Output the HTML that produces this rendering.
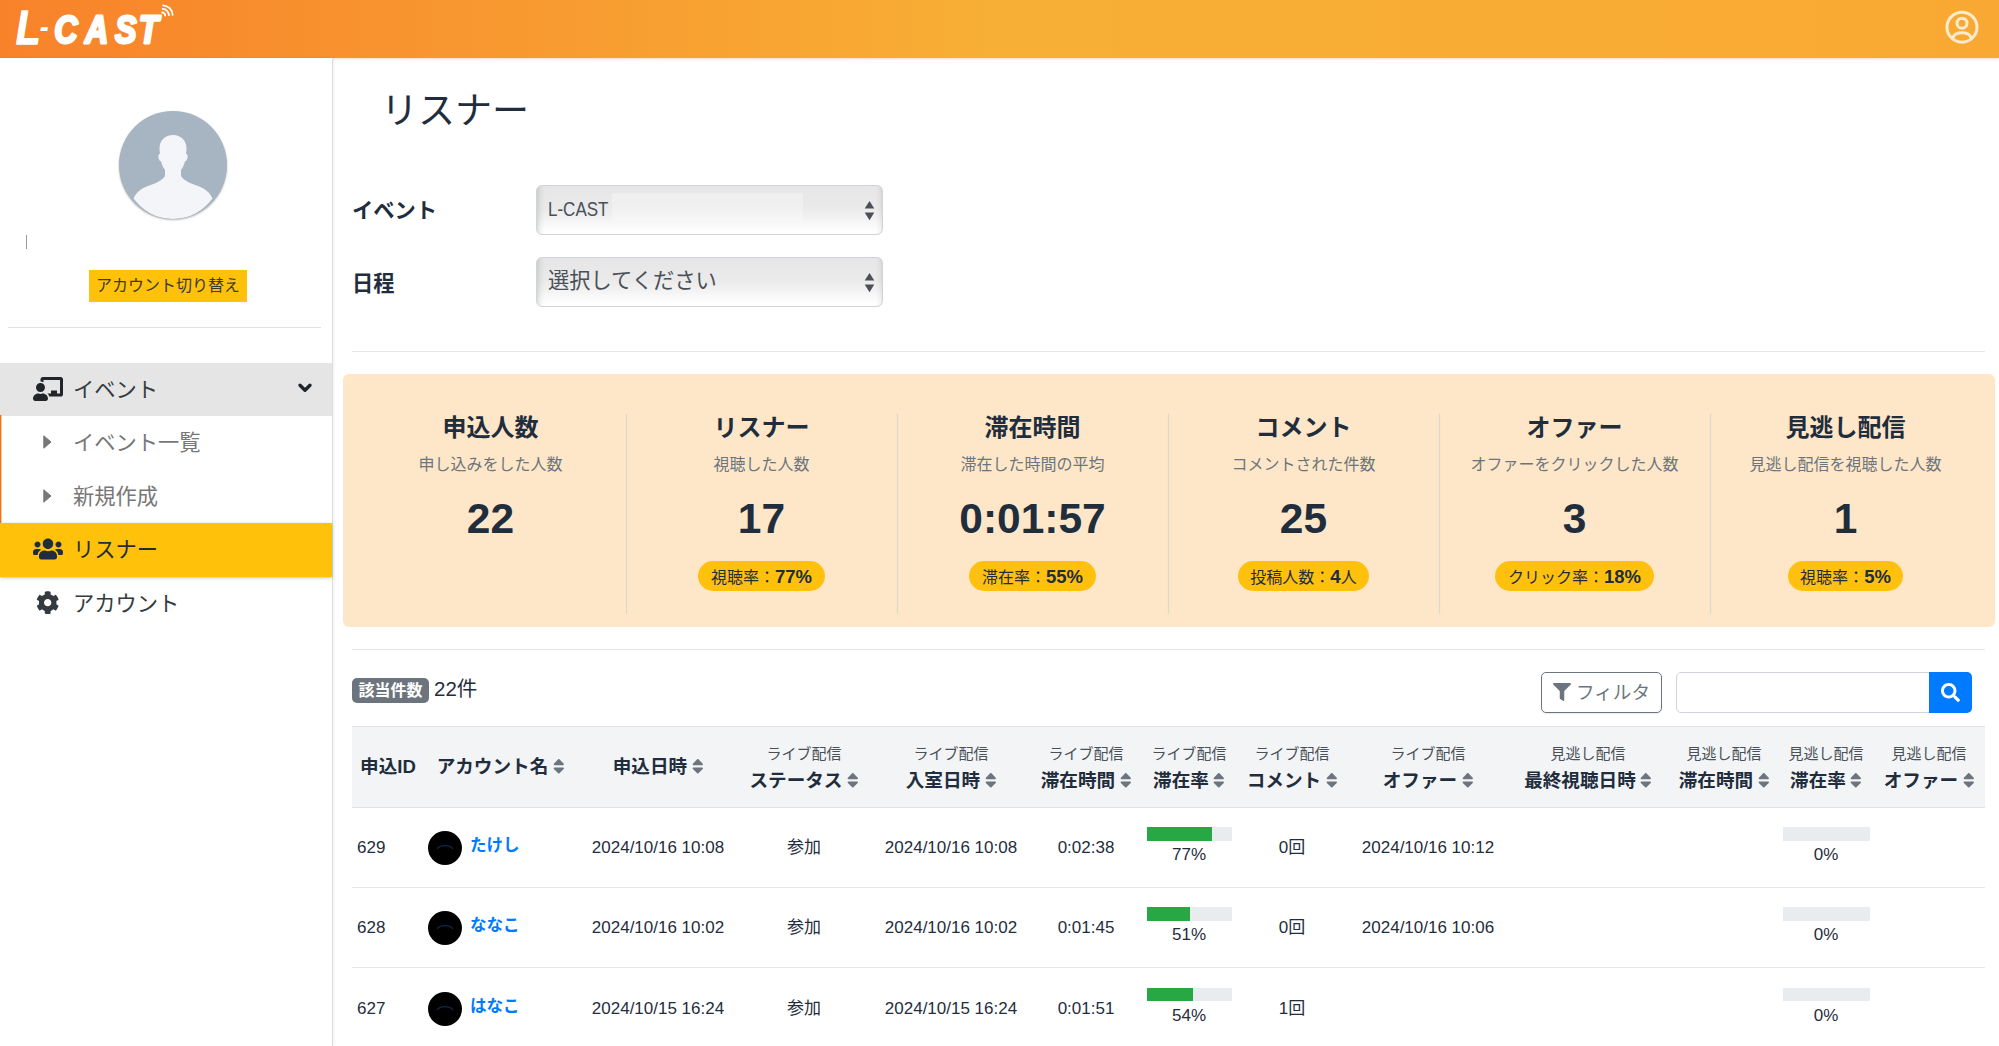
<!DOCTYPE html>
<html lang="ja">
<head>
<meta charset="utf-8">
<title>リスナー | L-CAST</title>
<style>
*{box-sizing:border-box;margin:0;padding:0}
html,body{width:1999px;height:1046px;overflow:hidden;background:#fff}
body{font-family:"Liberation Sans","Noto Sans CJK JP",sans-serif;color:#1f2d3d;position:relative;font-size:17px;line-height:1.5}
.abs{position:absolute}
svg{display:block}
/* header */
#hdr{left:0;top:0;width:1999px;height:58px;background:linear-gradient(90deg,#f8822a 0%,#f8af35 50%,#f9a933 100%);box-shadow:0 1px 2px rgba(248,150,50,.35)}
/* sidebar */
#side{left:0;top:58px;width:333px;height:988px;background:#fff;border-right:1px solid #dcdcdc;box-shadow:1px 0 3px rgba(0,0,0,.06)}
#avatar{left:119px;top:111px;width:108px;height:108px;border-radius:50%;background:#a7b5c2;overflow:hidden;box-shadow:0 1px 2px rgba(0,0,0,.3)}
#cursor{left:26px;top:235px;width:1px;height:14px;background:#9a9a9a}
#switch{left:89px;top:270px;width:158px;height:32px;background:#ffc10a;color:#3a3a32;font-size:16px;line-height:32px;text-align:center;white-space:nowrap}
#shr{left:8px;top:327px;width:313px;height:1px;background:#dee2e6}
.nav{left:0;width:332px;height:53px;font-size:21.25px;line-height:53px;color:#343a40;white-space:nowrap}
.nav .ic{position:absolute;top:0;left:0}
.nav .tx{position:absolute;left:73px;top:1px}
.sub{color:#777}
/* main */
#title{left:381px;top:83px;font-size:37px;line-height:58px;color:#1f2d3d;white-space:nowrap}
.lbl{left:352px;font-size:21.25px;font-weight:bold;line-height:32px;white-space:nowrap;color:#1f2d3d}
.sel{left:536px;width:347px;height:50px;border:1px solid #ced4da;border-radius:6px;background:linear-gradient(90deg,rgba(60,70,80,.16) 0,rgba(60,70,80,.05) 4px,rgba(0,0,0,0) 8px,rgba(0,0,0,0) 339px,rgba(60,70,80,.05) 343px,rgba(60,70,80,.16) 347px),linear-gradient(180deg,#e6e6e6 0%,#eaeaea 45%,#f1f1f1 65%,#fbfbfb 85%,#ffffff 100%);color:#495057;white-space:nowrap;overflow:hidden}
.sel .t{position:absolute;left:11px;top:0;line-height:48px}
.sel svg{position:absolute;left:327px;top:14px}
.hr{height:1px;background:#e3e6ea}
/* stats */
#stats{left:343px;top:374px;width:1652px;height:253px;background:#fee7c8;border-radius:6px}
.st{position:absolute;top:0;width:271px;height:253px;text-align:center;white-space:nowrap;color:#1f2d3d}
.st .h{position:absolute;left:0;width:100%;top:36px;font-size:24px;font-weight:bold;line-height:36px}
.st .s{position:absolute;left:0;width:100%;top:78.500px;font-size:16px;line-height:24px;color:#6c757d}
.st .n{position:absolute;left:0;width:100%;top:113px;font-size:42.5px;font-weight:bold;line-height:64px}
.st .b{position:absolute;left:0;width:100%;top:187px;height:30px;line-height:30px}
.st .b span.p{display:inline-block;height:30px;padding:1px 12.500px 0;border-radius:15px;background:#ffc10e;font-size:16px;line-height:29px;color:#1f2d3d;vertical-align:top}
.st .b b{font-size:18.5px}
.dv{position:absolute;top:40px;width:1px;height:200px;background:#ddd9d1;box-shadow:0 0 1px rgba(200,200,200,.6)}
/* table */
#cnt{left:352px;top:678px;height:25px;padding:0 6.500px;background:#6c757d;color:#fff;font-weight:bold;font-size:16px;line-height:25px;border-radius:5px;white-space:nowrap}
#cntn{left:434px;top:672px;font-size:20.500px;line-height:34px;color:#1f2d3d;white-space:nowrap}
#fbtn{left:1541px;top:672px;width:121px;height:41px;border:1px solid #6c757d;border-radius:5px;color:#6c757d;font-size:18.6px;line-height:39px;white-space:nowrap;box-shadow:0 1px 1px rgba(0,0,0,.08)}
#sinp{left:1676px;top:672px;width:254px;height:41px;border:1px solid #ced4da;border-radius:5px 0 0 5px;background:#fff}
#sbtn{left:1929px;top:672px;width:43px;height:41px;background:#007bff;border-radius:0 5px 5px 0}
#thead{left:352px;top:726px;width:1633px;height:82px;background:#f3f4f6;border-top:1px solid #dee2e6;border-bottom:1px solid #dee2e6}
.th{position:absolute;text-align:center;white-space:nowrap;color:#1f2d3d}
.th .a{display:block;font-size:15px;line-height:24px;color:#495057;font-weight:normal}
.th .m{display:block;font-size:18.6px;line-height:30px;font-weight:bold}
.th svg{display:inline-block;vertical-align:-3px;margin-left:4.500px}
.row{left:352px;width:1633px;height:80px;border-bottom:1px solid #e3e6ea;font-size:17px;color:#1f2d3d}
.td{position:absolute;top:0;height:80px;line-height:80px;text-align:center;white-space:nowrap}
.av{position:absolute;left:76px;top:23px;width:34px;height:34px;border-radius:50%;background:#000;overflow:hidden}
.nm{position:absolute;left:118px;top:0;line-height:75px;font-weight:bold;color:#007bff;font-size:16.5px}
.pb{position:absolute;top:19px;height:13.5px;background:#e9ecef}
.pb i{display:block;height:100%;background:#28a745}
.pc{position:absolute;top:33px;line-height:28px;text-align:center;font-size:17px}
</style>
</head>
<body>
<div id="hdr" class="abs">
  <svg id="logo" class="abs" style="left:0;top:0" width="200" height="58" viewBox="0 0 200 58"><g transform="scale(0.84 1)"><text x="19 47.32 64.6 101.19 136.9 165.18" y="44 37.2 43.3 43 43.3 43" font-family="'Liberation Sans',sans-serif" font-weight="bold" font-style="italic" font-size="38.4" fill="#fff" stroke="#fff" stroke-width="2.8" stroke-linejoin="round"><tspan font-size="47.5" stroke-width="1.4">L</tspan><tspan font-size="32" stroke-width="0.1">-</tspan>CAST</text></g></svg>
  <svg class="abs" style="left:160px;top:4px" width="14" height="15" viewBox="0 0 14 15" fill="none" stroke="#fff" stroke-width="1.8" stroke-linecap="round">
    <path d="M2.2 8.500a3 3 0 0 1 3 3"/><path d="M2.6 4.900a6.400 6.400 0 0 1 6.300 6.300"/><path d="M3 1.300a10 10 0 0 1 9.600 9.600"/>
  </svg>
  <svg class="abs" style="left:1945px;top:10px" width="34" height="34" viewBox="0 0 34 34" fill="none" stroke="#fdebd0" stroke-width="3">
    <circle cx="17" cy="17.200" r="15"/>
    <circle cx="17" cy="13.200" r="5"/>
    <path d="M8 27.500c1.400-4.200 5-4.800 9-4.800s7.600.6 9 4.800" stroke-linecap="round"/>
  </svg>
</div>

<div id="side" class="abs"></div>
<div id="avatar" class="abs">
  <svg width="108" height="108" viewBox="0 0 108 108"><path fill="#f3f5f8" d="M54 24c-8 0-13.500 5.500-13.500 13.500 0 2 .2 3.800.5 5.300-1.300.3-1.900 1.600-1.600 3.400.4 2.300 1.300 4 2.700 4.300.8 3.600 2.200 6.300 3.900 8.300v6.200c-3 4.800-9.500 7.500-17 10-6.500 2.200-11.500 6-14.500 12.500 9 12 22.500 20.500 39.500 20.500s30.500-8.500 39.500-20.500c-3-6.500-8-10.300-14.500-12.500-7.500-2.500-14-5.200-17-10v-6.200c1.700-2 3.100-4.700 3.900-8.300 1.400-.3 2.300-2 2.700-4.300.3-1.800-.3-3.100-1.600-3.400.3-1.500.5-3.300.5-5.300C67.500 29.500 62 24 54 24z"/></svg>
</div>
<div id="cursor" class="abs"></div>
<div id="switch" class="abs">アカウント切り替え</div>
<div id="shr" class="abs"></div>

<div class="abs nav" style="top:363px;background:#e5e5e5">
  <svg class="ic" style="left:33px;top:14px" width="30" height="24" viewBox="0 0 640 512"><path fill="#212529" d="M208 352c-2.390 0-4.780.350-7.060 1.090C187.980 357.300 174.350 360 160 360c-14.350 0-27.980-2.700-40.950-6.910-2.280-.740-4.660-1.090-7.050-1.090C49.940 352-.330 402.480 0 464.620.140 490.880 21.730 512 48 512h224c26.270 0 47.860-21.120 48-47.380.330-62.140-49.940-112.620-112-112.620zm-48-32c53.020 0 96-42.980 96-96s-42.980-96-96-96-96 42.980-96 96 42.980 96 96 96zM592 0H208c-26.470 0-48 22.250-48 49.590V96c23.420 0 45.100 6.780 64 17.800V64h352v288h-64v-64H384v64h-76.240c19.100 16.690 33.120 38.730 39.690 64H592c26.470 0 48-22.250 48-49.590V49.590C640 22.250 618.470 0 592 0z"/></svg>
  <span class="tx">イベント</span>
  <svg class="ic" style="left:297px;top:19px" width="16" height="12" viewBox="0 0 16 12" fill="none" stroke="#212529" stroke-width="3.400" stroke-linecap="round" stroke-linejoin="round"><path d="M3 3.300L8 8.300 13 3.300"/></svg>
</div>
<div class="abs" style="left:0;top:415px;width:2px;height:108px;background:linear-gradient(90deg,#f8700c 0,#f8700c 50%,rgba(248,112,12,.35) 50%)"></div>
<div class="abs nav sub" style="top:415px;height:54px;line-height:54px">
  <svg class="ic" style="left:43px;top:20px" width="9" height="14" viewBox="0 0 9 14"><path fill="#777" d="M.8 0.800L8 7 .8 13.200z" stroke="#777" stroke-width="1" stroke-linejoin="round"/></svg>
  <span class="tx">イベント一覧</span>
</div>
<div class="abs nav sub" style="top:469px;height:54px;line-height:54px">
  <svg class="ic" style="left:43px;top:20px" width="9" height="14" viewBox="0 0 9 14"><path fill="#777" d="M.8 0.800L8 7 .8 13.200z" stroke="#777" stroke-width="1" stroke-linejoin="round"/></svg>
  <span class="tx">新規作成</span>
</div>
<div class="abs nav" style="top:523px;height:54px;line-height:53px;background:#ffc10a;color:#1f2d3d;box-shadow:0 1px 3px rgba(0,0,0,.25)">
  <svg class="ic" style="left:33px;top:14px" width="30" height="24" viewBox="0 0 640 512"><path fill="#1f2d3d" d="M96 224c35.300 0 64-28.700 64-64s-28.700-64-64-64-64 28.700-64 64 28.700 64 64 64zm448 0c35.300 0 64-28.700 64-64s-28.700-64-64-64-64 28.700-64 64 28.700 64 64 64zm32 32h-64c-17.600 0-33.500 7.100-45.100 18.600 40.300 22.100 68.900 62 75.100 109.400h66c17.700 0 32-14.300 32-32v-32c0-35.300-28.700-64-64-64zm-256 0c61.900 0 112-50.100 112-112S381.900 32 320 32 208 82.100 208 144s50.100 112 112 112zm76.800 32h-8.300c-20.800 10-43.900 16-68.500 16s-47.600-6-68.500-16h-8.300C179.600 288 128 339.600 128 403.200V432c0 26.500 21.500 48 48 48h288c26.500 0 48-21.500 48-48v-28.800c0-63.600-51.600-115.200-115.200-115.200zm-223.700-13.400C161.500 263.100 145.600 256 128 256H64c-35.300 0-64 28.700-64 64v32c0 17.700 14.300 32 32 32h65.900c6.300-47.400 34.900-87.300 75.200-109.400z"/></svg>
  <span class="tx">リスナー</span>
</div>
<div class="abs nav" style="top:577px;height:53px">
  <svg class="ic" style="left:36px;top:14px" width="23.400" height="23.400" viewBox="0 0 512 512"><path fill="#343a40" d="M487.400 315.700l-42.600-24.600c4.300-23.200 4.300-47 0-70.200l42.600-24.600c4.900-2.800 7.100-8.600 5.500-14-11.100-35.600-30-67.800-54.700-94.600-3.800-4.100-10-5.100-14.800-2.300L380.800 110c-17.900-15.400-38.500-27.300-60.800-35.100V25.800c0-5.600-3.900-10.500-9.400-11.700-36.700-8.200-74.300-7.800-109.200 0-5.500 1.200-9.400 6.100-9.400 11.700V75c-22.200 7.900-42.800 19.800-60.800 35.100L88.700 85.500c-4.900-2.800-11-1.900-14.800 2.300-24.700 26.700-43.600 58.900-54.700 94.600-1.700 5.400.6 11.200 5.500 14L67.300 221c-4.300 23.200-4.300 47 0 70.200l-42.600 24.600c-4.900 2.800-7.100 8.600-5.500 14 11.100 35.600 30 67.800 54.700 94.600 3.800 4.100 10 5.100 14.800 2.300l42.600-24.600c17.900 15.400 38.500 27.300 60.800 35.100v49.200c0 5.600 3.900 10.500 9.400 11.700 36.700 8.200 74.300 7.800 109.200 0 5.500-1.200 9.400-6.100 9.400-11.700v-49.200c22.200-7.900 42.800-19.800 60.800-35.100l42.600 24.600c4.900 2.800 11 1.900 14.800-2.300 24.700-26.700 43.600-58.900 54.700-94.600 1.500-5.500-.7-11.300-5.600-14.100zM256 336c-44.100 0-80-35.900-80-80s35.900-80 80-80 80 35.900 80 80-35.900 80-80 80z"/></svg>
  <span class="tx">アカウント</span>
</div>

<div id="title" class="abs">リスナー</div>
<div class="abs lbl" style="top:195px">イベント</div>
<div class="abs sel" style="top:185px;font-size:20px"><span class="t" style="display:inline-block;transform:scaleX(.85);transform-origin:0 50%;line-height:47px">L-CAST</span><span class="abs" style="left:75px;top:7px;width:191px;height:28px;background:rgba(255,255,255,.3)"></span><svg width="11" height="21" viewBox="0 0 11 21"><path fill="#495057" d="M5.500 1L10.300 8.600H.7zM5.500 20.200L.7 12.600h9.600z"/></svg></div>
<div class="abs lbl" style="top:268px">日程</div>
<div class="abs sel" style="top:257px;font-size:21.25px"><span class="t" style="line-height:47px">選択してください</span><svg width="11" height="21" viewBox="0 0 11 21"><path fill="#495057" d="M5.500 1L10.300 8.600H.7zM5.500 20.200L.7 12.600h9.600z"/></svg></div>
<div class="abs hr" style="left:352px;top:351px;width:1633px"></div>

<div id="stats" class="abs">
  <div class="st" style="left:12px"><div class="h">申込人数</div><div class="s">申し込みをした人数</div><div class="n">22</div></div>
  <div class="st" style="left:283px"><div class="h">リスナー</div><div class="s">視聴した人数</div><div class="n">17</div><div class="b"><span class="p">視聴率：<b>77%</b></span></div></div>
  <div class="st" style="left:554px"><div class="h">滞在時間</div><div class="s">滞在した時間の平均</div><div class="n">0:01:57</div><div class="b"><span class="p">滞在率：<b>55%</b></span></div></div>
  <div class="st" style="left:825px"><div class="h">コメント</div><div class="s">コメントされた件数</div><div class="n">25</div><div class="b"><span class="p">投稿人数：<b>4</b>人</span></div></div>
  <div class="st" style="left:1096px"><div class="h">オファー</div><div class="s">オファーをクリックした人数</div><div class="n">3</div><div class="b"><span class="p">クリック率：<b>18%</b></span></div></div>
  <div class="st" style="left:1367px"><div class="h">見逃し配信</div><div class="s">見逃し配信を視聴した人数</div><div class="n">1</div><div class="b"><span class="p">視聴率：<b>5%</b></span></div></div>
  <div class="dv" style="left:283px"></div>
  <div class="dv" style="left:554px"></div>
  <div class="dv" style="left:825px"></div>
  <div class="dv" style="left:1096px"></div>
  <div class="dv" style="left:1367px"></div>
</div>
<div class="abs hr" style="left:352px;top:649px;width:1633px"></div>

<div id="cnt" class="abs">該当件数</div><div id="cntn" class="abs">22件</div>
<div id="fbtn" class="abs"><svg class="abs" style="left:11px;top:10px" width="18" height="18" viewBox="0 0 512 512"><path fill="#6c757d" d="M487.976 0H24.028C2.710 0-8.047 25.866 7.058 40.971L192 225.941V432c0 7.831 3.821 15.170 10.237 19.662l80 55.980C298.020 518.690 320 507.493 320 487.980V225.941l184.947-184.970C520.021 25.896 509.338 0 487.976 0z"/></svg><span class="abs" style="left:34px;top:0">フィルタ</span></div>
<div id="sinp" class="abs"></div>
<div id="sbtn" class="abs"><svg class="abs" style="left:12px;top:11px" width="19" height="19" viewBox="0 0 512 512"><path fill="#fff" d="M505 442.700L405.300 343c-4.500-4.500-10.600-7-17-7H372c27.600-35.300 44-79.700 44-128C416 93.100 322.900 0 208 0S0 93.100 0 208s93.100 208 208 208c48.300 0 92.700-16.400 128-44v16.300c0 6.400 2.500 12.500 7 17l99.700 99.700c9.400 9.400 24.600 9.400 33.900 0l28.300-28.300c9.400-9.400 9.400-24.600.1-34zM208 336c-70.700 0-128-57.200-128-128 0-70.700 57.200-128 128-128 70.700 0 128 57.200 128 128 0 70.700-57.200 128-128 128z"/></svg></div>
<div id="thead" class="abs">
  <div class="th" style="left:0px;width:72px;top:25px"><span class="m">申込ID</span></div>
  <div class="th" style="left:70px;width:157px;top:25px"><span class="m">アカウント名<svg width="11.600" height="18.600" viewBox="0 0 320 512"><path fill="#6c757d" d="M41 288h238c21.400 0 32.100 25.900 17 41L177 448c-9.400 9.400-24.600 9.400-33.900 0L24 329c-15.100-15.100-4.400-41 17-41zm255-105L177 64c-9.400-9.400-24.600-9.400-33.900 0L24 183c-15.100 15.100-4.400 41 17 41h238c21.400 0 32.100-25.900 17-41z"/></svg></span></div>
  <div class="th" style="left:229px;width:154px;top:25px"><span class="m">申込日時<svg width="11.600" height="18.600" viewBox="0 0 320 512"><path fill="#6c757d" d="M41 288h238c21.400 0 32.100 25.900 17 41L177 448c-9.400 9.400-24.600 9.400-33.900 0L24 329c-15.100-15.100-4.400-41 17-41zm255-105L177 64c-9.400-9.400-24.600-9.400-33.900 0L24 183c-15.100 15.100-4.400 41 17 41h238c21.400 0 32.100-25.900 17-41z"/></svg></span></div>
  <div class="th" style="left:383px;width:138px;top:15px"><span class="a">ライブ配信</span><span class="m">ステータス<svg width="11.600" height="18.600" viewBox="0 0 320 512"><path fill="#6c757d" d="M41 288h238c21.400 0 32.100 25.900 17 41L177 448c-9.400 9.400-24.600 9.400-33.900 0L24 329c-15.100-15.100-4.400-41 17-41zm255-105L177 64c-9.400-9.400-24.600-9.400-33.900 0L24 183c-15.100 15.100-4.400 41 17 41h238c21.400 0 32.100-25.900 17-41z"/></svg></span></div>
  <div class="th" style="left:521px;width:156px;top:15px"><span class="a">ライブ配信</span><span class="m">入室日時<svg width="11.600" height="18.600" viewBox="0 0 320 512"><path fill="#6c757d" d="M41 288h238c21.400 0 32.100 25.900 17 41L177 448c-9.400 9.400-24.600 9.400-33.900 0L24 329c-15.100-15.100-4.400-41 17-41zm255-105L177 64c-9.400-9.400-24.600-9.400-33.900 0L24 183c-15.100 15.100-4.400 41 17 41h238c21.400 0 32.100-25.900 17-41z"/></svg></span></div>
  <div class="th" style="left:677px;width:114px;top:15px"><span class="a">ライブ配信</span><span class="m">滞在時間<svg width="11.600" height="18.600" viewBox="0 0 320 512"><path fill="#6c757d" d="M41 288h238c21.400 0 32.100 25.900 17 41L177 448c-9.400 9.400-24.600 9.400-33.900 0L24 329c-15.100-15.100-4.400-41 17-41zm255-105L177 64c-9.400-9.400-24.600-9.400-33.900 0L24 183c-15.100 15.100-4.400 41 17 41h238c21.400 0 32.100-25.900 17-41z"/></svg></span></div>
  <div class="th" style="left:791px;width:92px;top:15px"><span class="a">ライブ配信</span><span class="m">滞在率<svg width="11.600" height="18.600" viewBox="0 0 320 512"><path fill="#6c757d" d="M41 288h238c21.400 0 32.100 25.900 17 41L177 448c-9.400 9.400-24.600 9.400-33.900 0L24 329c-15.100-15.100-4.400-41 17-41zm255-105L177 64c-9.400-9.400-24.600-9.400-33.900 0L24 183c-15.100 15.100-4.400 41 17 41h238c21.400 0 32.100-25.900 17-41z"/></svg></span></div>
  <div class="th" style="left:883px;width:114px;top:15px"><span class="a">ライブ配信</span><span class="m">コメント<svg width="11.600" height="18.600" viewBox="0 0 320 512"><path fill="#6c757d" d="M41 288h238c21.400 0 32.100 25.900 17 41L177 448c-9.400 9.400-24.600 9.400-33.900 0L24 329c-15.100-15.100-4.400-41 17-41zm255-105L177 64c-9.400-9.400-24.600-9.400-33.900 0L24 183c-15.100 15.100-4.400 41 17 41h238c21.400 0 32.100-25.900 17-41z"/></svg></span></div>
  <div class="th" style="left:997px;width:158px;top:15px"><span class="a">ライブ配信</span><span class="m">オファー<svg width="11.600" height="18.600" viewBox="0 0 320 512"><path fill="#6c757d" d="M41 288h238c21.400 0 32.100 25.900 17 41L177 448c-9.400 9.400-24.600 9.400-33.900 0L24 329c-15.100-15.100-4.400-41 17-41zm255-105L177 64c-9.400-9.400-24.600-9.400-33.900 0L24 183c-15.100 15.100-4.400 41 17 41h238c21.400 0 32.100-25.900 17-41z"/></svg></span></div>
  <div class="th" style="left:1155px;width:162px;top:15px"><span class="a">見逃し配信</span><span class="m">最終視聴日時<svg width="11.600" height="18.600" viewBox="0 0 320 512"><path fill="#6c757d" d="M41 288h238c21.400 0 32.100 25.900 17 41L177 448c-9.400 9.400-24.600 9.400-33.900 0L24 329c-15.100-15.100-4.400-41 17-41zm255-105L177 64c-9.400-9.400-24.600-9.400-33.900 0L24 183c-15.100 15.100-4.400 41 17 41h238c21.400 0 32.100-25.900 17-41z"/></svg></span></div>
  <div class="th" style="left:1317px;width:110px;top:15px"><span class="a">見逃し配信</span><span class="m">滞在時間<svg width="11.600" height="18.600" viewBox="0 0 320 512"><path fill="#6c757d" d="M41 288h238c21.400 0 32.100 25.900 17 41L177 448c-9.400 9.400-24.600 9.400-33.900 0L24 329c-15.100-15.100-4.400-41 17-41zm255-105L177 64c-9.400-9.400-24.600-9.400-33.900 0L24 183c-15.100 15.100-4.400 41 17 41h238c21.400 0 32.100-25.900 17-41z"/></svg></span></div>
  <div class="th" style="left:1427px;width:94px;top:15px"><span class="a">見逃し配信</span><span class="m">滞在率<svg width="11.600" height="18.600" viewBox="0 0 320 512"><path fill="#6c757d" d="M41 288h238c21.400 0 32.100 25.900 17 41L177 448c-9.400 9.400-24.600 9.400-33.900 0L24 329c-15.100-15.100-4.400-41 17-41zm255-105L177 64c-9.400-9.400-24.600-9.400-33.900 0L24 183c-15.100 15.100-4.400 41 17 41h238c21.400 0 32.100-25.900 17-41z"/></svg></span></div>
  <div class="th" style="left:1521px;width:112px;top:15px"><span class="a">見逃し配信</span><span class="m">オファー<svg width="11.600" height="18.600" viewBox="0 0 320 512"><path fill="#6c757d" d="M41 288h238c21.400 0 32.100 25.900 17 41L177 448c-9.400 9.400-24.600 9.400-33.900 0L24 329c-15.100-15.100-4.400-41 17-41zm255-105L177 64c-9.400-9.400-24.600-9.400-33.900 0L24 183c-15.100 15.100-4.400 41 17 41h238c21.400 0 32.100-25.900 17-41z"/></svg></span></div>
</div>
<div class="abs row" style="top:808.0px">
  <div class="td" style="left:5px;text-align:left">629</div><div class="av"><svg width="34" height="34" viewBox="0 0 34 34"><path d="M9 18c3-4.500 13-4.500 16 0" fill="none" stroke="#0d2a4a" stroke-width="1.200"/></svg></div><div class="nm">たけし</div>
  <div class="td" style="left:229px;width:154px">2024/10/16 10:08</div><div class="td" style="left:383px;width:138px">参加</div><div class="td" style="left:521px;width:156px">2024/10/16 10:08</div><div class="td" style="left:677px;width:114px">0:02:38</div>
  <div class="pb" style="left:795px;width:85px"><i style="width:77%"></i></div><div class="pc" style="left:791px;width:92px">77%</div><div class="td" style="left:883px;width:114px">0回</div><div class="td" style="left:997px;width:158px">2024/10/16 10:12</div>
  <div class="pb" style="left:1431px;width:87px"><i style="width:0%"></i></div><div class="pc" style="left:1427px;width:94px">0%</div>
</div>
<div class="abs row" style="top:888.3px">
  <div class="td" style="left:5px;text-align:left">628</div><div class="av"><svg width="34" height="34" viewBox="0 0 34 34"><path d="M9 18c3-4.500 13-4.500 16 0" fill="none" stroke="#0d2a4a" stroke-width="1.200"/></svg></div><div class="nm">ななこ</div>
  <div class="td" style="left:229px;width:154px">2024/10/16 10:02</div><div class="td" style="left:383px;width:138px">参加</div><div class="td" style="left:521px;width:156px">2024/10/16 10:02</div><div class="td" style="left:677px;width:114px">0:01:45</div>
  <div class="pb" style="left:795px;width:85px"><i style="width:51%"></i></div><div class="pc" style="left:791px;width:92px">51%</div><div class="td" style="left:883px;width:114px">0回</div><div class="td" style="left:997px;width:158px">2024/10/16 10:06</div>
  <div class="pb" style="left:1431px;width:87px"><i style="width:0%"></i></div><div class="pc" style="left:1427px;width:94px">0%</div>
</div>
<div class="abs row" style="top:968.6px">
  <div class="td" style="left:5px;text-align:left">627</div><div class="av"><svg width="34" height="34" viewBox="0 0 34 34"><path d="M9 18c3-4.500 13-4.500 16 0" fill="none" stroke="#0d2a4a" stroke-width="1.200"/></svg></div><div class="nm">はなこ</div>
  <div class="td" style="left:229px;width:154px">2024/10/15 16:24</div><div class="td" style="left:383px;width:138px">参加</div><div class="td" style="left:521px;width:156px">2024/10/15 16:24</div><div class="td" style="left:677px;width:114px">0:01:51</div>
  <div class="pb" style="left:795px;width:85px"><i style="width:54%"></i></div><div class="pc" style="left:791px;width:92px">54%</div><div class="td" style="left:883px;width:114px">1回</div><div class="td" style="left:997px;width:158px"></div>
  <div class="pb" style="left:1431px;width:87px"><i style="width:0%"></i></div><div class="pc" style="left:1427px;width:94px">0%</div>
</div>

</body>
</html>
